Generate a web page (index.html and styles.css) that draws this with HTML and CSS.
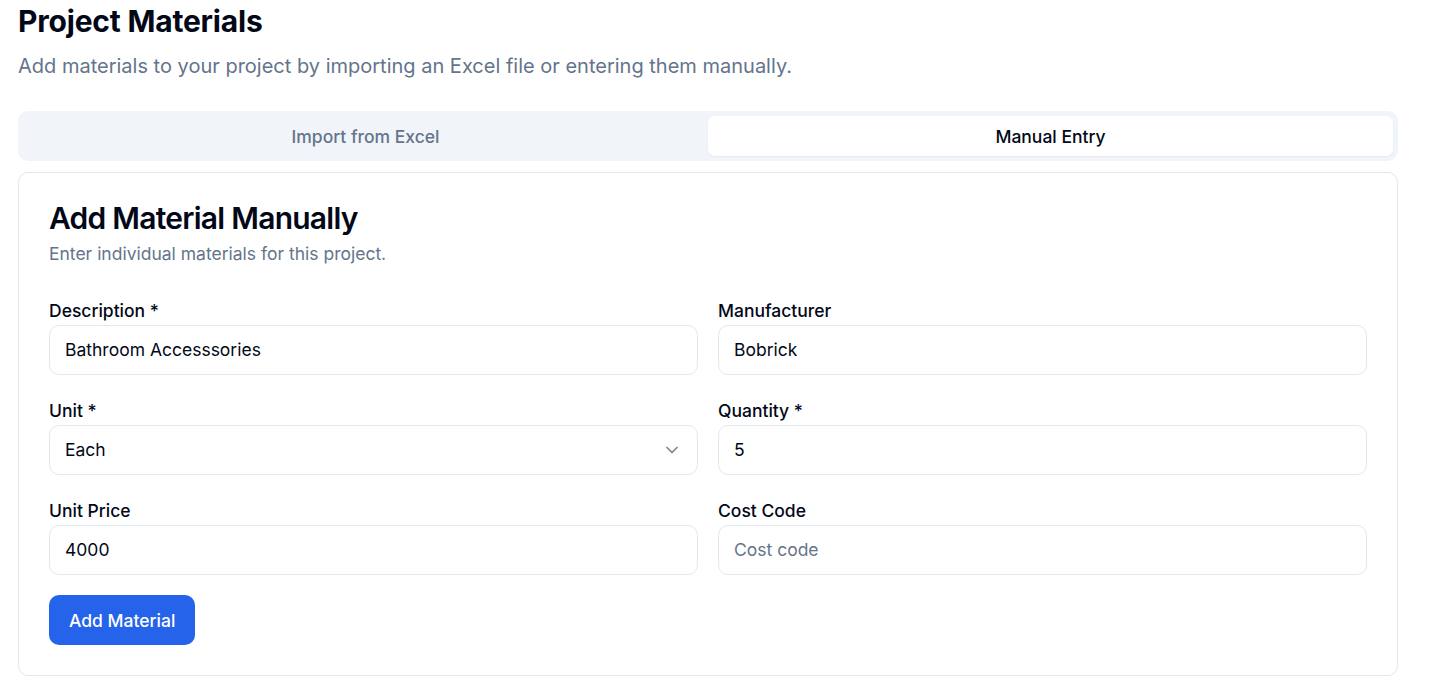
FILE: index.html
```html
<!DOCTYPE html>
<html>
<head>
<meta charset="utf-8">
<link rel="stylesheet" href="styles.css">
</head>
<body>
<div class="page">
  <h1 class="title">Project Materials</h1>
  <p class="subtitle">Add materials to your project by importing an Excel file or entering them manually.</p>
  <div class="tabs">
    <button class="tab">Import from Excel</button>
    <button class="tab active">Manual Entry</button>
  </div>
  <div class="card">
    <h2 class="card-title">Add Material Manually</h2>
    <p class="card-sub">Enter individual materials for this project.</p>
    <div class="grid">
      <div class="field">
        <label class="label">Description *</label>
        <div class="input">Bathroom Accesssories</div>
      </div>
      <div class="field">
        <label class="label">Manufacturer</label>
        <div class="input">Bobrick</div>
      </div>
      <div class="field">
        <label class="label">Unit *</label>
        <div class="input select"><span>Each</span>
          <svg class="chev" width="20" height="20" viewBox="0 0 24 24" fill="none" stroke="currentColor" stroke-width="2" stroke-linecap="round" stroke-linejoin="round"><path d="m6 9 6 6 6-6"/></svg>
        </div>
      </div>
      <div class="field">
        <label class="label">Quantity *</label>
        <div class="input">5</div>
      </div>
      <div class="field">
        <label class="label">Unit Price</label>
        <div class="input">4000</div>
      </div>
      <div class="field">
        <label class="label">Cost Code</label>
        <div class="input placeholder">Cost code</div>
      </div>
    </div>
    <button class="btn">Add Material</button>
  </div>
</div>
</body>
</html>
```

FILE: styles.css
```css
* { box-sizing: border-box; }
html, body { margin: 0; padding: 0; background: #ffffff; }
body { font-family: Inter, "Noto Sans", sans-serif; color: #020817; }
.page { width: 1380px; margin-left: 18px; }
.title { margin: 0; padding-top: 1px; font-size: 30px; line-height: 40px; font-weight: 700; letter-spacing: -0.2px; color: #020817; }
.subtitle { margin: 10px 0 0; font-size: 20px; line-height: 30px; color: #64748b; }
.tabs { margin-top: 30px; display: flex; background: #f1f5f9; border-radius: 10px; padding: 5px; height: 50px; }
.tab { flex: 1; border: 0; background: transparent; font-family: Inter, sans-serif; font-size: 17.5px; font-weight: 500; color: #64748b; border-radius: 7px; cursor: pointer; padding: 0; }
.tab.active { background: #ffffff; color: #020817; box-shadow: 0 1px 2px rgba(0,0,0,0.05); }
.card { margin-top: 11px; border: 1px solid #e2e8f0; border-radius: 10px; padding: 30px 30px 30px; }
.card-title { margin: 0; font-size: 30px; line-height: 30px; font-weight: 600; letter-spacing: -0.75px; color: #020817; }
.card-sub { margin: 8px 0 0; font-size: 17.5px; line-height: 25px; color: #64748b; }
.grid { margin-top: 34px; display: grid; grid-template-columns: 1fr 1fr; column-gap: 20px; row-gap: 25px; }
.field { display: flex; flex-direction: column; gap: 3px; }
.label { font-size: 17.5px; line-height: 22px; font-weight: 500; color: #020817; }
.input { height: 50px; border: 1px solid #e2e8f0; border-radius: 10px; padding: 0 15px 1px; display: flex; align-items: center; font-size: 17.5px; color: #020817; }
.input.select { justify-content: space-between; }
.chev { color: #020817; opacity: 0.5; }
.input.placeholder { color: #64748b; }
.btn { margin-top: 20px; height: 50px; padding: 0 20px; border: 0; border-radius: 10px; background: #2563eb; color: #ffffff; font-family: Inter, sans-serif; font-size: 17.5px; font-weight: 500; }
```
